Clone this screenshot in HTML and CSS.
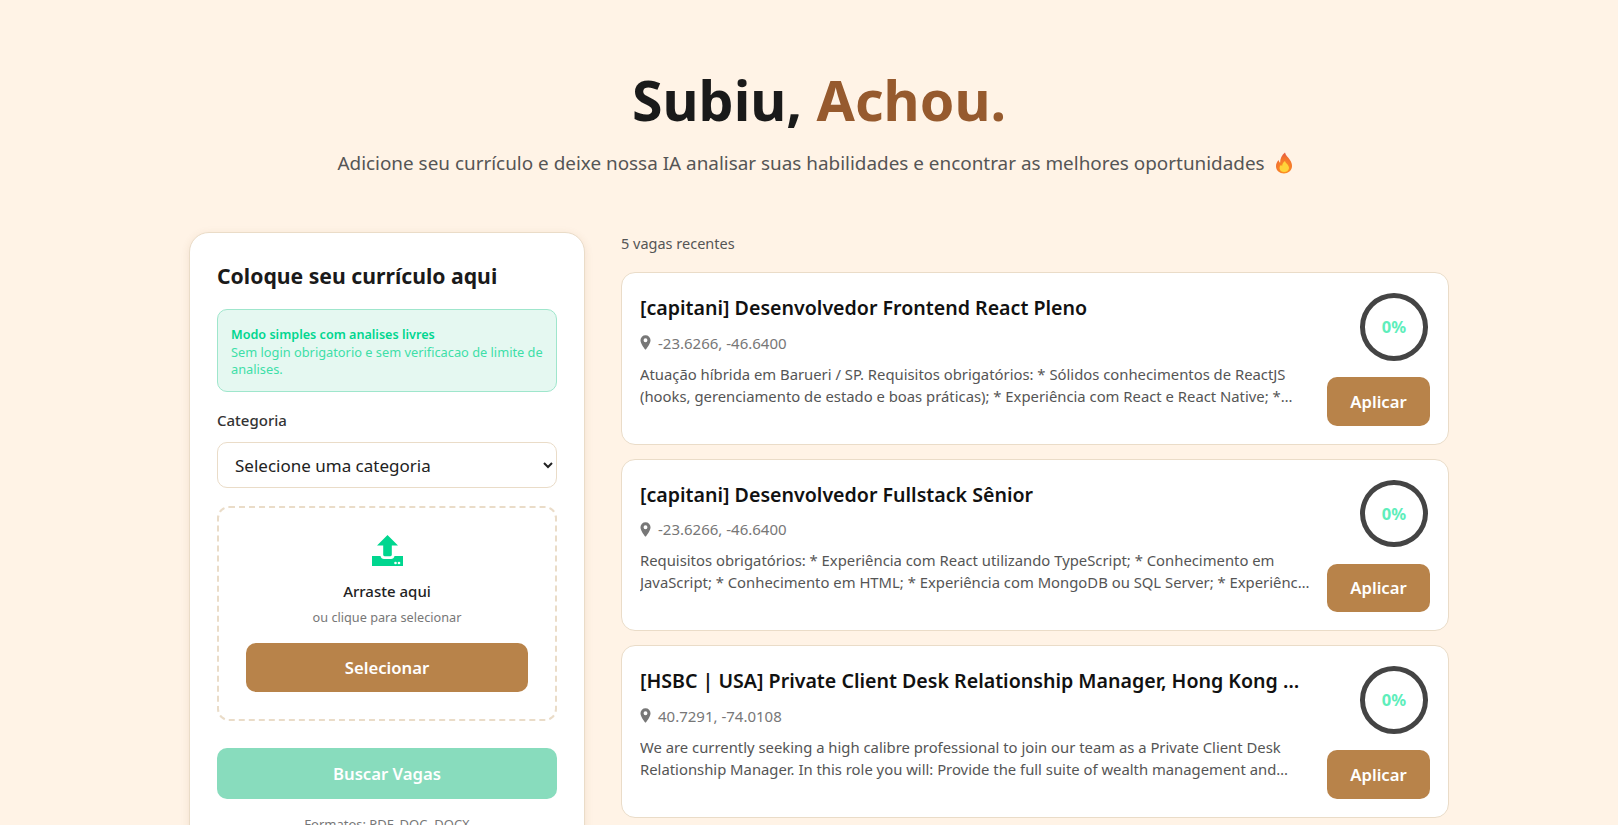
FILE: index.html
```html
<!DOCTYPE html>
<html lang="pt-BR">
<head>
  <meta charset="UTF-8">
  <meta name="viewport" content="width=device-width, initial-scale=1.0">
  <title>Subiu, Achou.</title>
  <link rel="stylesheet" href="styles.css">
</head>
<body>
  <div class="page">
    <header class="hero">
      <h1>Subiu, <span class="accent">Achou.</span></h1>
      <p class="subtitle">Adicione seu currículo e deixe nossa IA analisar suas habilidades e encontrar as melhores oportunidades
        <svg class="flame" viewBox="0 0 18 22" width="18" height="22" aria-hidden="true">
          <defs>
            <radialGradient id="flameFill" cx="0.55" cy="0.8" r="0.85">
              <stop offset="0" stop-color="#ff9a1f"/>
              <stop offset="0.6" stop-color="#f4762c"/>
              <stop offset="1" stop-color="#e0524a"/>
            </radialGradient>
          </defs>
          <path fill="url(#flameFill)" d="M10 0.5c0.6 3 3 4.5 4.8 7.2 1.4 2.1 2.4 4.200 2.200 6.800-0.300 4-3.700 7-8 7s-8-3-8-7.200c0-2.600 1.200-4.600 2.600-6.200 0.200 1.300 0.700 2.100 1.500 2.600 0-4 1.700-7.700 4.900-10.200z"/>
          <path fill="#ffd43a" d="M10 9c0.400 1.700 2 2.600 3 4.200 0.800 1.200 1.200 2.300 0.900 3.500-0.500 2-2.500 3.300-4.700 3.300s-4.400-1.400-4.600-3.600c-0.100-1.500 0.600-2.700 1.500-3.600 0.200 0.700 0.500 1.100 1 1.400 0-2.100 1.100-3.900 2.900-5.200z"/>
        </svg>
      </p>
    </header>

    <main class="columns">
      <section class="upload-card">
        <h2>Coloque seu currículo aqui</h2>

        <div class="notice">
          <strong>Modo simples com analises livres</strong>
          <span>Sem login obrigatorio e sem verificacao de limite de analises.</span>
        </div>

        <label class="field-label" for="categoria">Categoria</label>
        <select id="categoria" class="field-select">
          <option>Selecione uma categoria</option>
        </select>

        <div class="dropzone">
          <svg class="upload-icon" viewBox="0 0 31 31" width="31" height="31" aria-hidden="true">
            <path fill="#00d68f" d="M15.500 0 26 10.500h-6.200v9.300c0 .8-.6 1.400-1.400 1.400h-5.800c-.8 0-1.400-.6-1.400-1.400v-9.300H5z"/>
            <path fill="#00d68f" d="M0 21h8.500c.3 2 1.700 3 3.500 3h7c1.800 0 3.200-1 3.500-3H31v10H0z"/>
            <circle cx="23.500" cy="28" r="1.300" fill="#fff"/>
            <circle cx="27" cy="28" r="1.300" fill="#fff"/>
          </svg>
          <div class="drop-title">Arraste aqui</div>
          <div class="drop-hint">ou clique para selecionar</div>
          <button class="btn btn-select">Selecionar</button>
        </div>

        <button class="btn btn-search">Buscar Vagas</button>
        <p class="formats">Formatos: PDF, DOC, DOCX</p>
      </section>

      <section class="jobs">
        <div class="jobs-count">5 vagas recentes</div>

        <article class="job-card">
          <div class="job-info">
            <h3>[capitani] Desenvolvedor Frontend React Pleno</h3>
            <div class="job-place">
              <svg class="pin" viewBox="0 0 12 16" width="11" height="15" aria-hidden="true"><path fill-rule="evenodd" d="M6 0a5.500 5.500 0 0 0-5.500 5.500C.5 9.500 6 16 6 16s5.500-6.500 5.500-10.500A5.500 5.500 0 0 0 6 0zm0 7.600a2.100 2.100 0 1 1 0-4.200 2.100 2.100 0 0 1 0 4.200z"/></svg>
              -23.6266, -46.6400
            </div>
            <p class="job-desc">Atuação híbrida em Barueri / SP. Requisitos obrigatórios: * Sólidos conhecimentos de ReactJS (hooks, gerenciamento de estado e boas práticas); * Experiência com React e React Native; * Conhecimento em testes automatizados</p>
          </div>
          <div class="job-side">
            <div class="score">0%</div>
            <button class="btn btn-apply">Aplicar</button>
          </div>
        </article>

        <article class="job-card">
          <div class="job-info">
            <h3>[capitani] Desenvolvedor Fullstack Sênior</h3>
            <div class="job-place">
              <svg class="pin" viewBox="0 0 12 16" width="11" height="15" aria-hidden="true"><path fill-rule="evenodd" d="M6 0a5.500 5.500 0 0 0-5.500 5.500C.5 9.500 6 16 6 16s5.500-6.500 5.500-10.500A5.500 5.500 0 0 0 6 0zm0 7.600a2.100 2.100 0 1 1 0-4.200 2.100 2.100 0 0 1 0 4.200z"/></svg>
              -23.6266, -46.6400
            </div>
            <p class="job-desc">Requisitos obrigatórios: * Experiência com React utilizando TypeScript; * Conhecimento em JavaScript; * Conhecimento em HTML; * Experiência com MongoDB ou SQL Server; * Experiência com versionamento de código e metodologias ágeis</p>
          </div>
          <div class="job-side">
            <div class="score">0%</div>
            <button class="btn btn-apply">Aplicar</button>
          </div>
        </article>

        <article class="job-card">
          <div class="job-info">
            <h3>[HSBC | USA] Private Client Desk Relationship Manager, Hong Kong Desk, New York</h3>
            <div class="job-place">
              <svg class="pin" viewBox="0 0 12 16" width="11" height="15" aria-hidden="true"><path fill-rule="evenodd" d="M6 0a5.500 5.500 0 0 0-5.500 5.500C.5 9.500 6 16 6 16s5.500-6.500 5.500-10.500A5.500 5.500 0 0 0 6 0zm0 7.600a2.100 2.100 0 1 1 0-4.200 2.100 2.100 0 0 1 0 4.200z"/></svg>
              40.7291, -74.0108
            </div>
            <p class="job-desc">We are currently seeking a high calibre professional to join our team as a Private Client Desk Relationship Manager. In this role you will: Provide the full suite of wealth management and banking services to clients</p>
          </div>
          <div class="job-side">
            <div class="score">0%</div>
            <button class="btn btn-apply">Aplicar</button>
          </div>
        </article>
      </section>
    </main>
  </div>
</body>
</html>
```

FILE: styles.css
```css
* {
  box-sizing: border-box;
}
html, body {
  height: 100%;
  overflow: hidden;
}
body {
  margin: 0;
  background-color: #fff3e6;
  color: #1a1a1a;
  font-family: "Noto Sans", Arial, sans-serif;
}
.page {
  width: 1260px;
  margin-left: 189px;
}

/* header */
.hero {
  padding-top: 61px;
  text-align: center;
}
.hero h1 {
  margin: 0;
  font-size: 55.5px;
  line-height: 78px;
  font-weight: 700;
}
.accent {
  color: #965a2e;
}
.subtitle {
  margin: 10px 0 0;
  padding-right: 8px;
  font-size: 18.9px;
  line-height: 28px;
  color: #555;
}
.flame {
  margin-left: 5px;
  vertical-align: -4px;
}

/* layout */
.columns {
  display: flex;
  gap: 36px;
  margin-top: 55px;
  align-items: flex-start;
}

/* upload column */
.upload-card {
  width: 396px;
  flex-shrink: 0;
  padding: 27px;
  background: #fff;
  border: 1px solid #eadcc8;
  border-radius: 20px;
  box-shadow: 0 2px 8px rgba(150, 90, 46, 0.12);
}
.upload-card h2 {
  margin: 0;
  font-size: 21.2px;
  line-height: 32px;
  font-weight: 700;
}
.notice {
  margin-top: 17px;
  padding: 16px 13px 12.5px;
  background: #e5f8f1;
  border: 1px solid #9fe6cc;
  border-radius: 10px;
  font-size: 12.8px;
  line-height: 17.500px;
  color: #3ddfa8;
}
.notice strong {
  display: block;
  font-size: 12.6px;
  font-weight: 600;
  color: #00d68f;
}
.field-label {
  display: block;
  margin-top: 17px;
  font-size: 15px;
  line-height: 22px;
  font-weight: 500;
  color: #333;
}
.field-select {
  display: block;
  width: 100%;
  height: 46px;
  margin-top: 11px;
  padding: 0 13px;
  background: #fff;
  border: 1px solid #eadcc8;
  border-radius: 10px;
  font-family: inherit;
  font-size: 17px;
  color: #222;
}
.dropzone {
  display: flex;
  flex-direction: column;
  align-items: center;
  height: 215px;
  margin-top: 18px;
  padding: 27px 27px 0;
  border: 2px dashed #eadcc8;
  border-radius: 12px;
}
.drop-title {
  margin-top: 14px;
  font-size: 15px;
  line-height: 22px;
  font-weight: 500;
  color: #222;
}
.drop-hint {
  margin-top: 6px;
  font-size: 12.7px;
  line-height: 18px;
  color: #777;
}
.btn {
  display: block;
  border: none;
  border-radius: 10px;
  color: #fff;
  font-family: inherit;
  font-size: 16.7px;
  font-weight: 600;
  cursor: pointer;
}
.btn-select {
  width: 100%;
  height: 49px;
  margin-top: 17px;
  background-color: #b8834a;
}
.btn-search {
  width: 100%;
  height: 51px;
  margin-top: 27px;
  background-color: #88dcbd;
}
.formats {
  margin: 16px 0 0;
  font-size: 13px;
  line-height: 18px;
  text-align: center;
  color: #777;
}

/* jobs column */
.jobs {
  flex: 1;
  min-width: 0;
}
.jobs-count {
  font-size: 14.5px;
  line-height: 22px;
  color: #555;
}
.job-card {
  display: flex;
  gap: 15px;
  height: 172.6px;
  margin-top: 14px;
  padding: 18px;
  background: #fff;
  border: 1px solid #eadcc8;
  border-radius: 14px;
}
.job-card:first-of-type {
  margin-top: 18px;
}
.job-info {
  flex: 1;
  min-width: 0;
}
.job-info h3 {
  margin: 0;
  font-size: 19.6px;
  line-height: 34px;
  font-weight: 600;
  color: #111;
  white-space: nowrap;
  overflow: hidden;
  text-overflow: ellipsis;
}
.job-place {
  display: flex;
  align-items: center;
  gap: 7px;
  margin-top: 6.500px;
  font-size: 15px;
  line-height: 22px;
  color: #777;
}
.pin {
  fill: #777;
}
.job-desc {
  display: -webkit-box;
  margin: 9px 0 0;
  font-size: 14.83px;
  line-height: 22px;
  color: #555;
  -webkit-box-orient: vertical;
  -webkit-line-clamp: 2;
  overflow: hidden;
}
.job-side {
  display: flex;
  flex-direction: column;
  align-items: flex-end;
  flex-shrink: 0;
  width: 103px;
  margin-top: 2px;
}
.score {
  display: flex;
  align-items: center;
  justify-content: center;
  width: 68px;
  height: 68px;
  margin-right: 2px;
  border: 5px solid #444;
  border-radius: 50%;
  font-size: 16.5px;
  font-weight: 700;
  color: #5eeebb;
}
.btn-apply {
  width: 103px;
  height: 49px;
  margin-top: 16.5px;
  background-color: #b8834a;
}
```
